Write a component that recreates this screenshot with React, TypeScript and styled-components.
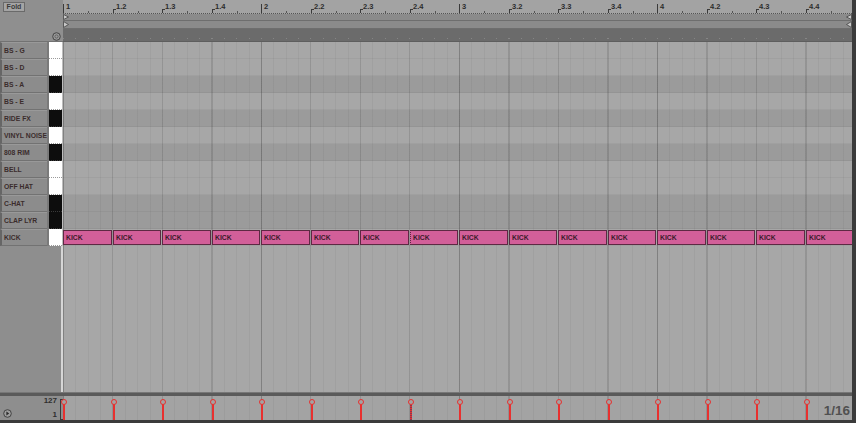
import React from 'react';
import styled, { createGlobalStyle, css } from 'styled-components';

const BEAT = 49.5;
const BEATS = 16;

const lanes = [
  { name: 'BS - G', black: false },
  { name: 'BS - D', black: false },
  { name: 'BS - A', black: true },
  { name: 'BS - E', black: false },
  { name: 'RIDE FX', black: true },
  { name: 'VINYL NOISE', black: false },
  { name: '808 RIM', black: true },
  { name: 'BELL', black: false },
  { name: 'OFF HAT', black: false },
  { name: 'C-HAT', black: true },
  { name: 'CLAP LYR', black: true },
  { name: 'KICK', black: false },
];

const beatX = (i: number) => Math.round(i * BEAT);
const beatLabel = (i: number) => {
  const bar = Math.floor(i / 4) + 1;
  const sub = (i % 4) + 1;
  return sub === 1 ? `${bar}` : `${bar}.${sub}`;
};

const GlobalStyle = createGlobalStyle`
  html, body {
    margin: 0;
    padding: 0;
    background: #3b3b3b;
  }
  body {
    font-family: "Liberation Sans", Arial, sans-serif;
  }
`;

const gridLines = css`
  background-image:
    repeating-linear-gradient(90deg, rgba(0, 0, 0, 0.13) 0 1px, transparent 1px 198px),
    repeating-linear-gradient(90deg, rgba(0, 0, 0, 0.08) 0 1px, transparent 1px 49.5px),
    repeating-linear-gradient(90deg, rgba(0, 0, 0, 0.045) 0 1px, transparent 1px 12.375px);
`;

const Frame = styled.div`
  width: 852px;
  height: 420px;
  display: flex;
  flex-direction: column;
  background: #8e8e8e;
  border-right: 4px solid #3b3b3b;
  border-bottom: 3px solid #3b3b3b;
  overflow: hidden;
`;

const Header = styled.div`
  display: flex;
  height: 42px;
  flex: none;
`;

const HeaderLeft = styled.div`
  width: 63px;
  flex: none;
  position: relative;
  background: #8f8f8f;
  border-bottom: 1px solid #727272;
  box-sizing: border-box;
`;

const FoldButton = styled.div`
  position: absolute;
  left: 3px;
  top: 2px;
  width: 22px;
  height: 10px;
  box-sizing: border-box;
  border: 1px solid #6a6a6a;
  background: #a4a4a4;
  font-size: 7px;
  font-weight: bold;
  color: #3a3a3a;
  line-height: 8px;
  text-align: center;
`;

const AddIcon = styled.svg`
  position: absolute;
  left: 52px;
  top: 32px;
`;

const HeaderRight = styled.div`
  flex: 1;
  display: flex;
  flex-direction: column;
`;

const Ruler = styled.div`
  height: 13px;
  position: relative;
  background: #a3a3a3;
  border-bottom: 1px dotted #555;
`;

const RulerMark = styled.div<{ $x: number; $bar: boolean }>`
  position: absolute;
  left: ${p => p.$x}px;
  top: ${p => (p.$bar ? 4 : 9)}px;
  bottom: 0;
  width: 3px;
  border-left: 1px solid #3a3a3a;
  border-top: ${p => (p.$bar ? 'none' : '1px solid #3a3a3a')};
  box-sizing: border-box;
`;

const RulerDot = styled.div<{ $x: number }>`
  position: absolute;
  left: ${p => p.$x}px;
  bottom: 0;
  width: 1px;
  height: 2px;
  background: #555;
`;

const RulerText = styled.span<{ $x: number }>`
  position: absolute;
  left: ${p => p.$x + 3}px;
  top: 2px;
  font-size: 7.5px;
  color: #2c2c2c;
  font-weight: bold;
`;

const LoopRow = styled.div<{ $h: number }>`
  height: ${p => p.$h}px;
  position: relative;
  background: #8b8b8b;
  border-bottom: 1px solid #6e6e6e;
`;

const Marker = styled.svg<{ $right?: boolean }>`
  position: absolute;
  top: 0;
  ${p => (p.$right ? 'right: 0;' : 'left: 0;')}
`;

const DarkStrip = styled.div`
  flex: 1;
  background: #6b6b6b;
  background-image: repeating-linear-gradient(90deg, rgba(255, 255, 255, 0.18) 0 1px, transparent 1px 12.375px);
  background-size: 100% 1px;
  background-repeat: repeat-x;
  background-position: 0 9px;
  border-bottom: 1px solid #5e5e5e;
`;

const Lane = styled.div`
  display: flex;
  height: 17px;
  flex: none;
`;

const LaneLabel = styled.div`
  width: 47px;
  flex: none;
  box-sizing: border-box;
  border-left: 2px solid #666;
  border-bottom: 1px solid #727272;
  border-top: 1px solid #999;
  background: #8c8c8c;
  display: flex;
  align-items: center;
  padding-left: 2px;
  font-size: 6.8px;
  font-weight: bold;
  color: #3b2c2c;
  white-space: nowrap;
  overflow: hidden;
`;

const LaneGap = styled.div`
  width: 2px;
  flex: none;
  background: #7a7a7a;
`;

const Key = styled.div<{ $black: boolean }>`
  width: 13px;
  flex: none;
  box-sizing: border-box;
  background: ${p => (p.$black ? '#0d0d0d' : '#ffffff')};
  border-bottom: 1px dotted ${p => (p.$black ? '#3a3a3a' : '#9a9a9a')};
`;

const KeyEdge = styled.div`
  width: 1px;
  flex: none;
  background: #bdbdbd;
`;

const LaneGrid = styled.div<{ $dark: boolean }>`
  flex: 1;
  position: relative;
  background-color: ${p => (p.$dark ? '#9b9b9b' : '#a7a7a7')};
  ${gridLines};
  box-shadow: inset 0 -1px 0 rgba(0, 0, 0, 0.04);
`;

const Note = styled.div<{ $x: number; $w: number; $sel: boolean }>`
  position: absolute;
  left: ${p => p.$x}px;
  width: ${p => p.$w}px;
  top: 1px;
  bottom: 1px;
  box-sizing: border-box;
  background: #d25f99;
  border: 1px solid #5d2943;
  border-left-style: ${p => (p.$sel ? 'dotted' : 'solid')};
  font-size: 6.8px;
  font-weight: bold;
  color: #3a1a2a;
  padding: 3px 0 0 2px;
`;

const EmptyArea = styled.div`
  flex: 1;
  display: flex;
`;

const EmptyLeft = styled.div`
  width: 61px;
  flex: none;
  background: #8e8e8e;
`;

const StartLine = styled.div`
  width: 2px;
  flex: none;
  background: #d6d6d6;
`;

const EmptyGrid = styled.div`
  flex: 1;
  background-color: #a7a7a7;
  ${gridLines};
`;

const Divider = styled.div`
  height: 4px;
  flex: none;
  background: #5a5a5a;
  border-top: 1px solid #777;
  box-sizing: border-box;
`;

const Velocity = styled.div`
  height: 24px;
  flex: none;
  display: flex;
`;

const VelLeft = styled.div`
  width: 63px;
  flex: none;
  position: relative;
  background: #8e8e8e;
  font-size: 8px;
  font-weight: bold;
  color: #2e2e2e;
`;

const VelNum = styled.span<{ $top: number }>`
  position: absolute;
  right: 6px;
  top: ${p => p.$top}px;
`;

const VelScale = styled.div`
  position: absolute;
  right: 0;
  top: 3px;
  bottom: 0;
  width: 3px;
  border: 1px solid #3a3a3a;
  border-right: none;
  box-sizing: border-box;
`;

const PlayIcon = styled.svg`
  position: absolute;
  left: 3px;
  top: 13px;
`;

const VelGrid = styled.div`
  flex: 1;
  position: relative;
  background-color: #a3a3a3;
  ${gridLines};
`;

const Stem = styled.div<{ $x: number; $sel: boolean }>`
  position: absolute;
  left: ${p => p.$x}px;
  top: 6px;
  bottom: 0;
  width: 2px;
  background: ${p =>
    p.$sel ? 'repeating-linear-gradient(180deg, #e8302f 0 1px, #8a3a50 1px 2px)' : '#e8302f'};
  &::before {
    content: '';
    position: absolute;
    left: -2px;
    top: -3px;
    width: 4px;
    height: 4px;
    border-radius: 50%;
    border: 1px solid #e8302f;
    background: #a3a3a3;
  }
`;

const Grid16 = styled.span`
  position: absolute;
  right: 2px;
  bottom: 2px;
  font-size: 13.5px;
  font-weight: bold;
  color: #505050;
`;

export default function App() {
  const beats = Array.from({ length: BEATS }, (_, i) => i);
  const noteW = (i: number) => beatX(i + 1) - beatX(i) - 1;

  return (
    <>
      <GlobalStyle />
      <Frame>
        <Header>
          <HeaderLeft>
            <FoldButton>Fold</FoldButton>
            <AddIcon width="9" height="9" viewBox="0 0 9 9">
              <circle cx="4.5" cy="4.5" r="3.8" fill="#9a9a9a" stroke="#444" strokeWidth="1" />
              <circle cx="4.5" cy="4.5" r="1.6" fill="none" stroke="#555" strokeWidth="0.8" />
            </AddIcon>
          </HeaderLeft>
          <HeaderRight>
            <Ruler>
              {beats.map(i => (
                <React.Fragment key={i}>
                  <RulerMark $x={beatX(i)} $bar={i % 4 === 0} />
                  <RulerDot $x={beatX(i) + 25} />
                  <RulerText $x={beatX(i)}>{beatLabel(i)}</RulerText>
                </React.Fragment>
              ))}
            </Ruler>
            <LoopRow $h={6}>
              <Marker width="6" height="6" viewBox="0 0 6 6">
                <path d="M0.5 0.5 L5.5 3 L0.5 5.5 Z" fill="#c8c8c8" stroke="#444" strokeWidth="0.8" />
              </Marker>
              <Marker $right width="6" height="6" viewBox="0 0 6 6">
                <path d="M5.5 0.5 L0.5 3 L5.5 5.5 Z" fill="#c8c8c8" stroke="#444" strokeWidth="0.8" />
              </Marker>
            </LoopRow>
            <LoopRow $h={7}>
              <Marker width="6" height="7" viewBox="0 0 6 7">
                <path d="M0.5 0.5 L5.5 3.5 L0.5 6.5 Z" fill="#c8c8c8" stroke="#444" strokeWidth="0.8" />
              </Marker>
              <Marker $right width="6" height="7" viewBox="0 0 6 7">
                <path d="M5.5 0.5 L0.5 3.5 L5.5 6.5 Z" fill="#c8c8c8" stroke="#444" strokeWidth="0.8" />
              </Marker>
            </LoopRow>
            <DarkStrip />
          </HeaderRight>
        </Header>

        {lanes.map(lane => (
          <Lane key={lane.name}>
            <LaneLabel>{lane.name}</LaneLabel>
            <LaneGap />
            <Key $black={lane.black} />
            <KeyEdge />
            <LaneGrid $dark={lane.black}>
              {lane.name === 'KICK' &&
                beats.map(i => (
                  <Note key={i} $x={beatX(i)} $w={noteW(i)} $sel={i === 7}>
                    KICK
                  </Note>
                ))}
            </LaneGrid>
          </Lane>
        ))}

        <EmptyArea>
          <EmptyLeft />
          <StartLine />
          <EmptyGrid />
        </EmptyArea>

        <Divider />

        <Velocity>
          <VelLeft>
            <VelNum $top={0}>127</VelNum>
            <VelNum $top={14}>1</VelNum>
            <VelScale />
            <PlayIcon width="9" height="9" viewBox="0 0 9 9">
              <circle cx="4.5" cy="4.5" r="3.8" fill="#9c9c9c" stroke="#3a3a3a" strokeWidth="0.9" />
              <path d="M3.4 2.6 L6.2 4.5 L3.4 6.4 Z" fill="#2a2a2a" />
            </PlayIcon>
          </VelLeft>
          <VelGrid>
            {beats.map(i => (
              <Stem key={i} $x={beatX(i)} $sel={i === 7} />
            ))}
            <Grid16>1/16</Grid16>
          </VelGrid>
        </Velocity>
      </Frame>
    </>
  );
}
